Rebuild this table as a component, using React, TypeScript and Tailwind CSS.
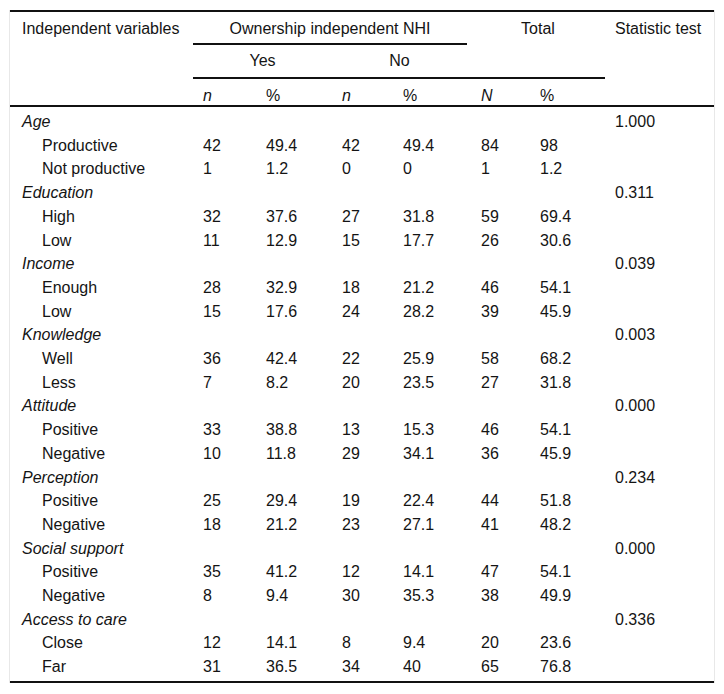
import React from "react";

type Sub = { label: string; v: string[] };
type Cat = { name: string; p: string; rows: Sub[] };

const data: Cat[] = [
  { name: "Age", p: "1.000", rows: [
    { label: "Productive", v: ["42", "49.4", "42", "49.4", "84", "98"] },
    { label: "Not productive", v: ["1", "1.2", "0", "0", "1", "1.2"] },
  ] },
  { name: "Education", p: "0.311", rows: [
    { label: "High", v: ["32", "37.6", "27", "31.8", "59", "69.4"] },
    { label: "Low", v: ["11", "12.9", "15", "17.7", "26", "30.6"] },
  ] },
  { name: "Income", p: "0.039", rows: [
    { label: "Enough", v: ["28", "32.9", "18", "21.2", "46", "54.1"] },
    { label: "Low", v: ["15", "17.6", "24", "28.2", "39", "45.9"] },
  ] },
  { name: "Knowledge", p: "0.003", rows: [
    { label: "Well", v: ["36", "42.4", "22", "25.9", "58", "68.2"] },
    { label: "Less", v: ["7", "8.2", "20", "23.5", "27", "31.8"] },
  ] },
  { name: "Attitude", p: "0.000", rows: [
    { label: "Positive", v: ["33", "38.8", "13", "15.3", "46", "54.1"] },
    { label: "Negative", v: ["10", "11.8", "29", "34.1", "36", "45.9"] },
  ] },
  { name: "Perception", p: "0.234", rows: [
    { label: "Positive", v: ["25", "29.4", "19", "22.4", "44", "51.8"] },
    { label: "Negative", v: ["18", "21.2", "23", "27.1", "41", "48.2"] },
  ] },
  { name: "Social support", p: "0.000", rows: [
    { label: "Positive", v: ["35", "41.2", "12", "14.1", "47", "54.1"] },
    { label: "Negative", v: ["8", "9.4", "30", "35.3", "38", "49.9"] },
  ] },
  { name: "Access to care", p: "0.336", rows: [
    { label: "Close", v: ["12", "14.1", "8", "9.4", "20", "23.6"] },
    { label: "Far", v: ["31", "36.5", "34", "40", "65", "76.8"] },
  ] },
];

const cols = "grid grid-cols-[183px_63px_76px_61px_78px_59px_75px_109px]";

export default function App() {
  return (
    <div className="bg-white w-[724px] h-[694px] pt-[10px] text-[16px] text-[#141414]" style={{ fontFamily: '"Liberation Sans", Arial, sans-serif' }}>
      <div className="ml-[9px] w-[706px] border-x border-[#e8e8e8]">
        <div className={`${cols} grid-rows-[33px_34px_26px] border-t-2 border-b-2 border-[#111] leading-[20px]`}>
          <div className="col-start-1 row-start-1 row-span-3 pl-[12px] pt-[7px] whitespace-nowrap">Independent variables</div>
          <div className="col-start-2 col-span-4 row-start-1 mr-[4px] border-b-2 border-[#111] text-center pt-[7px] whitespace-nowrap">Ownership independent NHI</div>
          <div className="col-start-6 col-span-2 row-start-1 row-span-2 border-b-2 border-[#111] text-center pt-[7px]">Total</div>
          <div className="col-start-8 row-start-1 row-span-3 pl-[10px] pt-[7px] whitespace-nowrap">Statistic test</div>
          <div className="col-start-2 col-span-2 row-start-2 border-b-2 border-[#111] text-center pt-[6px]">Yes</div>
          <div className="col-start-4 col-span-2 row-start-2 border-b-2 border-[#111] text-center pt-[6px] pr-[4px]">No</div>
          <div className="col-start-2 row-start-3 pl-[10px] pt-[7px] italic">n</div>
          <div className="col-start-3 row-start-3 pl-[10px] pt-[7px]">%</div>
          <div className="col-start-4 row-start-3 pl-[10px] pt-[7px] italic">n</div>
          <div className="col-start-5 row-start-3 pl-[10px] pt-[7px]">%</div>
          <div className="col-start-6 row-start-3 pl-[10px] pt-[7px] italic">N</div>
          <div className="col-start-7 row-start-3 pl-[10px] pt-[7px]">%</div>
        </div>
        <div className={`${cols} pt-[3px] pb-[2px] border-b-2 border-[#111] leading-[23.7px]`}>
          {data.map((c) => (
            <React.Fragment key={c.name}>
              <div className="col-span-7 pl-[12px] italic">{c.name}</div>
              <div className="pl-[10px]">{c.p}</div>
              {c.rows.map((r, i) => (
                <React.Fragment key={c.name + i}>
                  <div className="pl-[32px] whitespace-nowrap">{r.label}</div>
                  {r.v.map((x, j) => (
                    <div key={j} className="pl-[10px]">{x}</div>
                  ))}
                  <div />
                </React.Fragment>
              ))}
            </React.Fragment>
          ))}
        </div>
      </div>
    </div>
  );
}
